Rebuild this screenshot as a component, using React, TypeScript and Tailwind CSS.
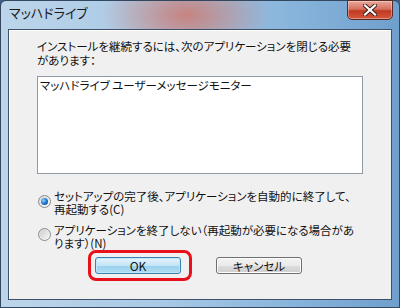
import React from "react";

function Radio({ checked }: { checked: boolean }) {
  return (
    <div className="w-[13px] h-[13px] rounded-full border border-[#8a8a8a] bg-[linear-gradient(135deg,#d8d8d8,#fbfbfb)] flex items-center justify-center shrink-0">
      {checked ? (
        <div className="w-[7px] h-[7px] rounded-full bg-[radial-gradient(circle_at_35%_35%,#8fd0ff,#1a6fc2_55%,#0b3f7a)]" />
      ) : (
        <div className="w-[9px] h-[9px] rounded-full bg-[linear-gradient(135deg,#cfcfcf,#f4f4f4)]" />
      )}
    </div>
  );
}

export default function App() {
  return (
    <div className="w-[400px] h-[308px] overflow-hidden bg-[#3b5f85]">
      <div className="relative w-[400px] h-[308px] rounded-t-[6px] border border-[#33485e] bg-[radial-gradient(ellipse_85px_45px_at_185px_14px,rgba(205,120,110,0.85),rgba(205,120,110,0)),linear-gradient(90deg,#bcd5ea_0%,#a9c9e6_40%,#86b3db_75%,#6f9fcc_100%)] pt-[28px] px-[7px] pb-[7px] flex flex-col font-['Noto_Sans_CJK_JP',sans-serif] [font-feature-settings:'palt'] text-[#111]">
        {/* title */}
        <div className="absolute left-[8px] top-[4px] text-[13px] leading-[16px] text-[#1a1a1a]">マッハドライブ</div>
        {/* close button */}
        <div className="absolute right-[6px] top-[-1px] w-[46px] h-[20px] rounded-b-[5px] border border-[#5a2a26] bg-[linear-gradient(180deg,#e8a89a_0%,#d6705e_45%,#c03a22_55%,#d4583c_100%)] flex items-center justify-center shadow-[inset_0_0_0_1px_rgba(255,255,255,0.35)]">
          <svg width="14" height="12" viewBox="0 0 14 12">
            <path d="M2 1.5 L12 10.5 M12 1.5 L2 10.5" stroke="#3a1a16" strokeWidth="4" strokeLinecap="square" />
            <path d="M2 1.5 L12 10.5 M12 1.5 L2 10.5" stroke="#ffffff" strokeWidth="2.2" strokeLinecap="square" />
          </svg>
        </div>
        {/* client area */}
        <div className="flex-1 border border-[#3c5167] bg-[#f0f0f0] shadow-[inset_1px_1px_0_#ffffff] flex flex-col pl-[28px] pr-[28px] text-[11.5px]">
          <div className="mt-[9px] leading-[14px] whitespace-nowrap">
            インストールを継続するには、次のアプリケーションを閉じる必要
            <br />
            があります：
          </div>
          <div className="mt-[9px] h-[98px] border border-[#8e9aa6] bg-white px-[2px] pt-[1px] leading-[14px] whitespace-nowrap">
            マッハドライブ ユーザーメッセージモニター
          </div>
          <div className="mt-[16px] flex items-start gap-[3px] pl-[1px]">
            <div className="mt-[5px]">
              <Radio checked />
            </div>
            <div className="leading-[13px] whitespace-nowrap">
              セットアップの完了後、アプリケーションを自動的に終了して、
              <br />
              再起動する(C)
            </div>
          </div>
          <div className="mt-[8px] flex items-start gap-[3px] pl-[1px]">
            <div className="mt-[4px]">
              <Radio checked={false} />
            </div>
            <div className="leading-[13px] whitespace-nowrap">
              アプリケーションを終了しない（再起動が必要になる場合があ
              <br />
              ります）(N)
            </div>
          </div>
          <div className="mt-[7px] flex pl-[58px] gap-[35px]">
            <div className="relative w-[86px] h-[17px] rounded-[3px] border border-[#3c7fb1] bg-[linear-gradient(180deg,#e5f4fc_0%,#c4e5f6_50%,#98d1ef_51%,#b2dcf1_100%)] shadow-[inset_0_0_0_1px_#bfe6fb] flex items-center justify-center leading-[14px] text-[12px]">
              OK
              <div className="absolute left-[-8px] top-[-8px] w-[104px] h-[31px] rounded-[8px] border-[3px] border-[#e8101a]" />
            </div>
            <div className="w-[86px] h-[17px] rounded-[3px] border border-[#707070] bg-[linear-gradient(180deg,#f2f2f2_0%,#ebebeb_50%,#dddddd_51%,#cfcfcf_100%)] shadow-[inset_0_0_0_1px_#fcfcfc] flex items-center justify-center leading-[14px]">
              キャンセル
            </div>
          </div>
        </div>
      </div>
    </div>
  );
}
